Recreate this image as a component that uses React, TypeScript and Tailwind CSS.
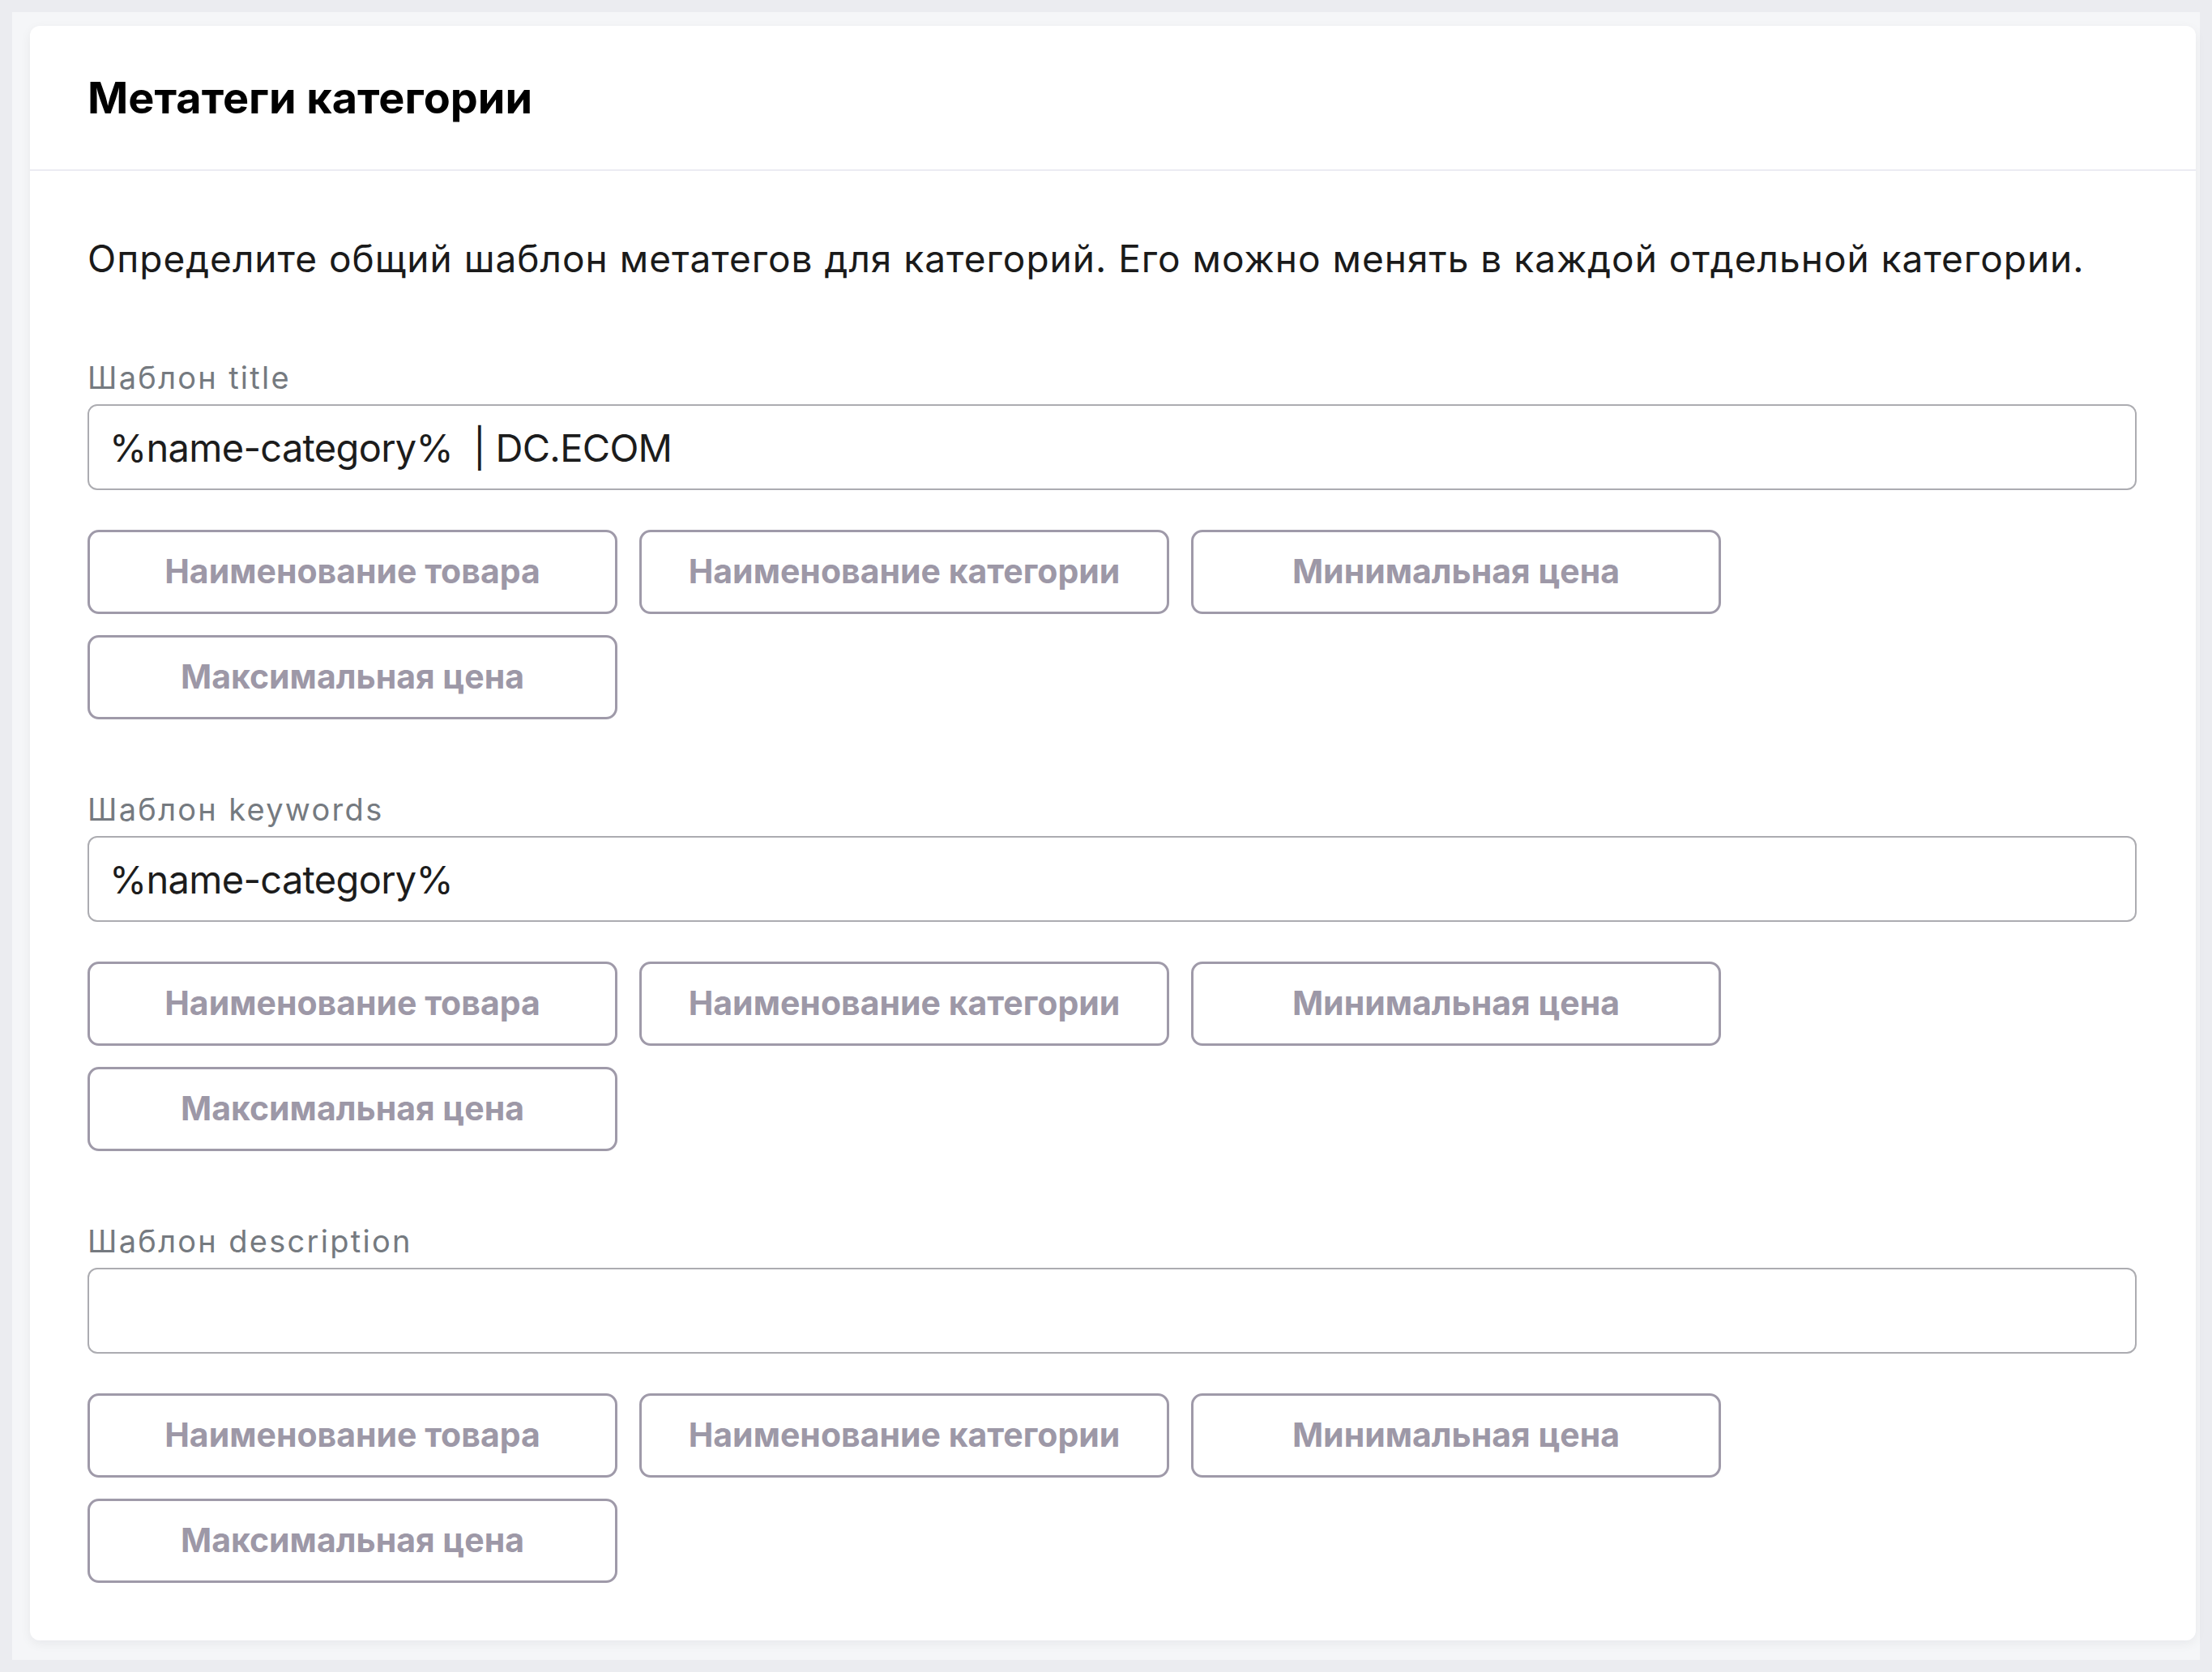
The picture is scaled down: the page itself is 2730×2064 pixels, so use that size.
import React from "react";

const buttons = [
  "Наименование товара",
  "Наименование категории",
  "Минимальная цена",
  "Максимальная цена",
];

function Field({ label, value, first }: { label: string; value: string; first?: boolean }) {
  return (
    <div className={first ? "mt-[98px] flex flex-col" : "mt-[89px] flex flex-col"}>
      <label className="text-[38px] leading-[44px] tracking-[2.3px] text-[#757a80]">{label}</label>
      <input
        readOnly
        defaultValue={value}
        className="mt-[11px] h-[106px] w-full rounded-[12px] border-2 border-[#acacb1] bg-white pl-[25px] text-[47px] tracking-[-0.7px] text-[#1c1c1c] outline-none whitespace-pre font-[family-name:'Inter',sans-serif]"
      />
      <div className="mt-[49px] flex flex-wrap gap-x-[27px] gap-y-[26px]">
        {buttons.map((b) => (
          <button
            key={b}
            className="h-[104px] w-[654px] rounded-[14px] border-[3px] border-[#9f9aa9] bg-white text-[41px] font-bold text-[#9d98a7] font-[family-name:'Inter',sans-serif]"
          >
            {b}
          </button>
        ))}
      </div>
    </div>
  );
}

export default function App() {
  return (
    <div className="w-[2730px] h-[2064px] bg-[#ebecf0] pt-[15px] pl-[15px] font-[family-name:'Inter',sans-serif]">
      <div className="w-[2700px] h-[2034px] bg-[#f5f6f8] pl-[22px] pt-[17px] pr-[5px] pb-[24px]">
        <div className="h-full w-full rounded-[12px] bg-white shadow-[0_4px_14px_rgba(20,20,40,0.06)]">
          <div className="flex h-[179px] items-center border-b-2 border-[#ebebf3] pl-[71px]">
            <h1 className="text-[54px] font-bold leading-none text-black">Метатеги категории</h1>
          </div>
          <div className="px-[71px] pr-[73px] pt-[81px]">
            <p className="text-[46px] leading-[54px] tracking-[1px] text-[#1a1a1a]">
              Определите общий шаблон метатегов для категорий. Его можно менять в каждой отдельной категории.
            </p>
            <Field first label="Шаблон title" value="%name-category%  | DC.ECOM" />
            <Field label="Шаблон keywords" value="%name-category%" />
            <Field label="Шаблон description" value="" />
          </div>
        </div>
      </div>
    </div>
  );
}
